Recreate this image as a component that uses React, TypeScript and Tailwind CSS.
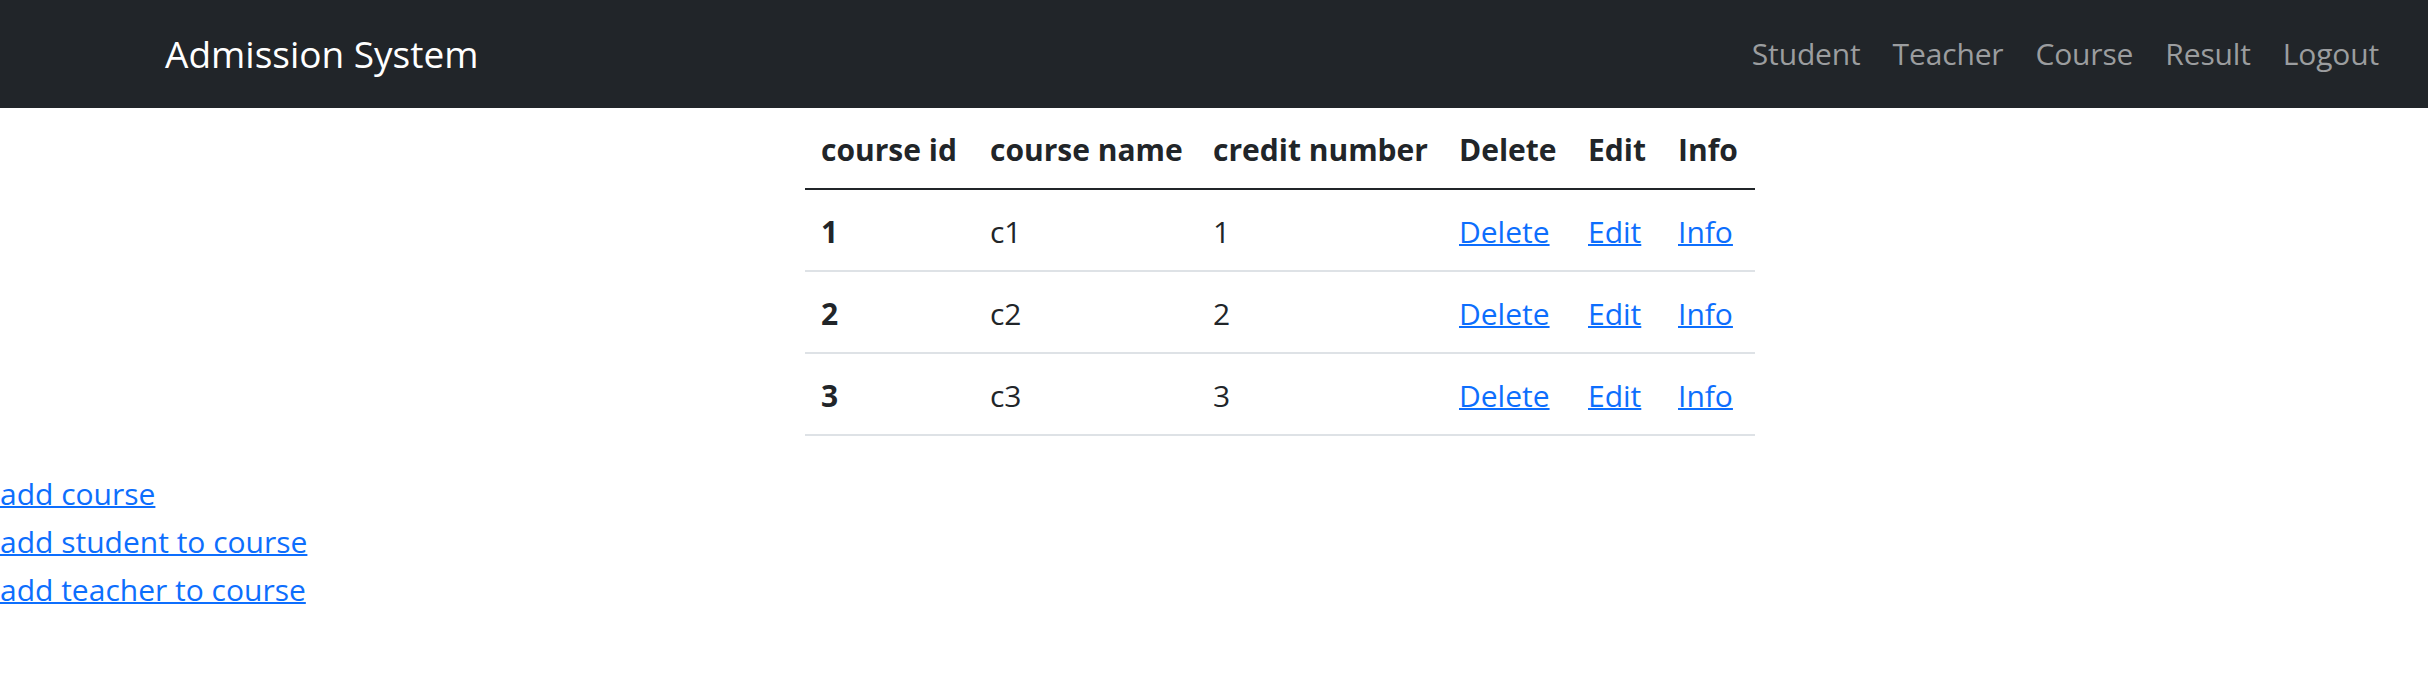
import React from 'react'

const courses = [
  { id: 1, name: 'c1', credit: 1 },
  { id: 2, name: 'c2', credit: 2 },
  { id: 3, name: 'c3', credit: 3 },
]

const navLinks = ['Student', 'Teacher', 'Course', 'Result', 'Logout']

const headers = ['course id', 'course name', 'credit number', 'Delete', 'Edit', 'Info']

export default function App() {
  return (
    <div className="min-h-screen bg-white text-[#212529]" style={{ fontFamily: '"Open Sans", "Noto Sans", sans-serif' }}>
      <nav className="flex h-[108px] items-center justify-between bg-[#212529] pl-[165px] pr-[33px]">
        <a href="#" className="text-[37px] leading-[1.5] text-white">
          Admission System
        </a>
        <ul className="flex">
          {navLinks.map(link => (
            <li key={link}>
              <a href="#" className="block px-4 text-[30px] leading-[48px] tracking-[-0.15px] text-[#9b9d9f]">
                {link}
              </a>
            </li>
          ))}
        </ul>
      </nav>

      <table className="ml-[805px] mb-8 w-[950px] table-fixed border-separate border-spacing-0 text-left text-[30px] leading-[48px]">
        <colgroup>
          <col className="w-[169px]" />
          <col className="w-[223px]" />
          <col className="w-[246px]" />
          <col className="w-[129px]" />
          <col className="w-[90px]" />
          <col className="w-[93px]" />
        </colgroup>
        <thead>
          <tr>
            {headers.map(h => (
              <th key={h} className="whitespace-nowrap border-b-2 border-[#212529] px-4 pt-[18px] pb-[14px] font-bold">
                {h}
              </th>
            ))}
          </tr>
        </thead>
        <tbody>
          {courses.map(c => (
            <tr key={c.id}>
              <th className="border-b-2 border-[#dee2e6] px-4 pt-[18px] pb-[14px] font-bold">{c.id}</th>
              <td className="border-b-2 border-[#dee2e6] px-4 pt-[18px] pb-[14px]">{c.name}</td>
              <td className="border-b-2 border-[#dee2e6] px-4 pt-[18px] pb-[14px]">{c.credit}</td>
              <td className="border-b-2 border-[#dee2e6] px-4 pt-[18px] pb-[14px]">
                <a href="#" className="text-[#0d6efd] underline decoration-2">Delete</a>
              </td>
              <td className="border-b-2 border-[#dee2e6] px-4 pt-[18px] pb-[14px]">
                <a href="#" className="text-[#0d6efd] underline decoration-2">Edit</a>
              </td>
              <td className="border-b-2 border-[#dee2e6] px-4 pt-[18px] pb-[14px]">
                <a href="#" className="text-[#0d6efd] underline decoration-2">Info</a>
              </td>
            </tr>
          ))}
        </tbody>
      </table>

      <div className="flex flex-col items-start pt-[2px] text-[30px] leading-[48px]">
        <a href="#" className="text-[#0d6efd] underline decoration-2">add course</a>
        <a href="#" className="text-[#0d6efd] underline decoration-2">add student to course</a>
        <a href="#" className="text-[#0d6efd] underline decoration-2">add teacher to course</a>
      </div>
    </div>
  )
}
